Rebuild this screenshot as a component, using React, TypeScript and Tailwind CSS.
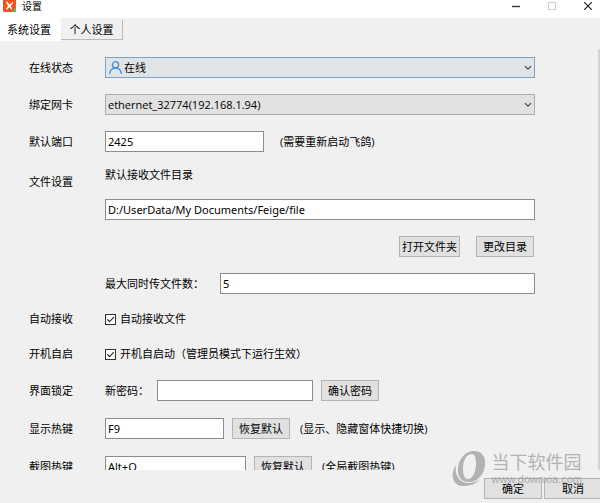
import React, { useState } from "react";
import clsx from "clsx";

const field =
  "h-[21px] min-w-0 border border-[#8c8c8c] bg-white px-0.5 font-['Noto_Sans','Noto_Sans_CJK_SC',sans-serif] outline-none";

type RowProps = { label: string; htmlFor?: string; children: React.ReactNode };

const Row: React.FC<RowProps> = ({ label, htmlFor, children }) => (
  <div className="flex items-center">
    <label htmlFor={htmlFor} className="w-[76px] shrink-0">
      {label}
    </label>
    <div className="flex min-w-0 flex-1 items-center">{children}</div>
  </div>
);

const Button: React.FC<React.ComponentProps<"button">> = ({
  className,
  ...props
}) => (
  <button
    type="button"
    className={clsx(
      "h-[21px] shrink-0 border border-[#b4b4b4] bg-[#e1e1e1] text-center whitespace-nowrap",
      className
    )}
    {...props}
  />
);

const Chevron = () => (
  <svg
    className="pointer-events-none absolute top-2 right-[3px] h-[6px] w-[8px]"
    viewBox="0 0 8 6"
    fill="none"
    stroke="#444"
    strokeWidth="1.2"
  >
    <path d="M1 1.2 4 4.2 7 1.2" />
  </svg>
);

const CheckBox: React.FC<{ id: string; label: string }> = ({ id, label }) => {
  const [checked, setChecked] = useState(true);
  return (
    <div className="flex h-5 items-center gap-1">
      <span className="relative flex">
        <input
          id={id}
          type="checkbox"
          checked={checked}
          onChange={e => setChecked(e.target.checked)}
          className="size-[11px] appearance-none border border-[#333] bg-white"
        />
        {checked && (
          <svg
            className="pointer-events-none absolute inset-0 size-[11px]"
            viewBox="0 0 11 11"
            fill="none"
            stroke="#222"
            strokeWidth="1.1"
          >
            <path d="M2.3 5.4 4.5 7.6 8.8 3.2" />
          </svg>
        )}
      </span>
      <label htmlFor={id}>{label}</label>
    </div>
  );
};

const TitleBar = () => (
  <header className="flex h-[18px] shrink-0 items-start justify-between bg-white pr-2 pl-[3px]">
    <div className="flex h-3 items-center gap-1.5">
      <svg className="h-3 w-[13px]" viewBox="0 0 13 12">
        <path d="M0 0H13V10.5Q13 12 11.5 12H1.5Q0 12 0 10.5Z" fill="#f4511e" />
        <path d="M13 7V12H8.5Z" fill="#5cb85c" />
        <path
          d="M2.8 1.6 4.6 1.9 6.2 4.2 8.4 3.6 9.6 1.4 10.2 2.8 8.2 5.4 7.8 6.6 9.4 9 8.2 9.2 6.2 7.2 4 9.6 2.8 9.2 5 6Z"
          fill="#fff"
        />
      </svg>
      <h1 className="text-[10px]">设置</h1>
    </div>
    <div className="flex h-[11px] items-center gap-7">
      <button type="button" aria-label="最小化">
        <svg className="block size-2" viewBox="0 0 8 8" stroke="#333" strokeWidth="1.4">
          <path d="M0 4.5H8" />
        </svg>
      </button>
      <button type="button" aria-label="最大化" disabled>
        <svg className="block size-2" viewBox="0 0 8 8" fill="none" stroke="#ccc">
          <path d="M.5.5H7.5V7.5H.5Z" />
        </svg>
      </button>
      <button type="button" aria-label="关闭">
        <svg className="block size-2" viewBox="0 0 8 8" stroke="#222" strokeWidth="1.2">
          <path d="M0 0 8 8M8 0 0 8" />
        </svg>
      </button>
    </div>
  </header>
);

const Watermark = () => (
  <div className="pointer-events-none absolute right-[18px] bottom-4 flex items-center gap-1.5 text-[#8a8a8a] opacity-60">
    <svg className="h-9 w-[34px]" viewBox="0 0 34 36" fill="currentColor">
      <path
        fillRule="evenodd"
        d="M22 0C30 0 34 6 33 14C32 24 25 31 17 31C9 31 5 25 6 17C7 8 13 0 22 0ZM20 3C14 3 11 10 11 17C11 23 12 28 16 28C21 28 24 20 24 13C24 7 23 3 20 3Z"
      />
      <path d="M4 14C-2 22 0 35 11 35C18 35 24 33 28 28C21 33 13 33 8 29C4 25 3 20 4 14Z" />
    </svg>
    <div className="flex flex-col">
      <span className="text-[18px] leading-5">当下软件园</span>
      <span className="font-['Liberation_Sans',sans-serif] text-[11px] leading-[14px]">
        www.downxia.com
      </span>
    </div>
  </div>
);

export default function App() {
  return (
    <div className="relative flex h-screen flex-col overflow-hidden bg-[#f0f0f0] font-['Open_Sans','Noto_Sans_CJK_SC',sans-serif] text-[11px] leading-4 text-black">
      <TitleBar />

      <nav className="flex h-[23px] shrink-0 items-start">
        <button type="button" className="h-[23px] w-[61px] bg-white pl-[7px] text-left">
          系统设置
        </button>
        <button
          type="button"
          className="mt-0.5 h-5 w-[62px] border-r border-b border-[#b8b8b8]"
        >
          个人设置
        </button>
      </nav>

      <div className="flex min-h-0 flex-1">
        <main className="min-w-0 flex-1 overflow-hidden pt-4 pr-[63px] pl-[29px] whitespace-nowrap">
          <div className="flex flex-col gap-4">
            <Row label="在线状态" htmlFor="status">
              <div className="relative flex-1">
                <select
                  id="status"
                  className="block h-[21px] w-full appearance-none border border-[#7da2c6] bg-[#e0e4e6] pl-[18px]"
                >
                  <option>在线</option>
                </select>
                <svg
                  className="pointer-events-none absolute top-1 left-1 size-[13px]"
                  viewBox="0 0 13 13"
                  fill="none"
                  stroke="#3a8ee6"
                  strokeWidth="1.3"
                  strokeLinecap="round"
                >
                  <circle cx="6.5" cy="3.8" r="3.1" />
                  <path d="M.8 12.3C1.2 9 3.2 7.2 6.5 7.2S11.8 9 12.2 12.3" />
                </svg>
                <Chevron />
              </div>
            </Row>
            <Row label="绑定网卡" htmlFor="adapter">
              <div className="relative flex-1">
                <select
                  id="adapter"
                  className="block h-[21px] w-full appearance-none border border-[#adadad] bg-[#e1e1e1] pl-0.5"
                >
                  <option>ethernet_32774(192.168.1.94)</option>
                </select>
                <Chevron />
              </div>
            </Row>
            <Row label="默认端口" htmlFor="port">
              <input id="port" className={clsx(field, "w-[159px]")} defaultValue="2425" />
              <span className="ml-4">(需要重新启动飞鸽)</span>
            </Row>
          </div>

          <section className="mt-[15px] flex">
            <h2 className="w-[76px] shrink-0 pt-[7px]">文件设置</h2>
            <div className="flex min-w-0 flex-1 flex-col gap-4">
              <label htmlFor="dir">默认接收文件目录</label>
              <input
                id="dir"
                className={field}
                defaultValue="D:/UserData/My Documents/Feige/file"
              />
              <div className="flex justify-end gap-4 pr-px">
                <Button className="w-[61px]">打开文件夹</Button>
                <Button className="w-[58px]">更改目录</Button>
              </div>
              <div className="flex items-center gap-4">
                <label htmlFor="max">最大同时传文件数：</label>
                <input id="max" className={clsx(field, "flex-1")} defaultValue="5" />
              </div>
            </div>
          </section>

          <div className="mt-[15px] flex flex-col gap-[15px]">
            <Row label="自动接收">
              <CheckBox id="receive" label="自动接收文件" />
            </Row>
            <Row label="开机自启">
              <CheckBox id="startup" label="开机自启动（管理员模式下运行生效）" />
            </Row>
          </div>

          <div className="mt-4 flex flex-col gap-[17px]">
            <Row label="界面锁定">
              <label htmlFor="password" className="w-[52px]">
                新密码：
              </label>
              <input id="password" type="password" className={clsx(field, "w-[156px]")} />
              <Button className="ml-2 w-[58px]">确认密码</Button>
            </Row>
            <Row label="显示热键" htmlFor="show">
              <input id="show" className={clsx(field, "w-[119px]")} defaultValue="F9" />
              <Button className="ml-2 w-[58px]">恢复默认</Button>
              <span className="ml-2.5">(显示、隐藏窗体快捷切换)</span>
            </Row>
            <Row label="截图热键" htmlFor="capture">
              <input id="capture" className={clsx(field, "w-[141px]")} defaultValue="Alt+Q" />
              <Button className="ml-2 w-[58px]">恢复默认</Button>
              <span className="ml-2.5">(全局截图热键)</span>
            </Row>
          </div>
        </main>
        <div className="mt-2 w-0.5 shrink-0 bg-[#d4d4d4]" />
      </div>

      <footer className="-mr-0.5 flex h-[33px] shrink-0 items-center justify-end gap-0.5 pt-1">
        <Button className="w-[58px]">确定</Button>
        <Button className="w-[58px]">取消</Button>
      </footer>

      <Watermark />
    </div>
  );
}
